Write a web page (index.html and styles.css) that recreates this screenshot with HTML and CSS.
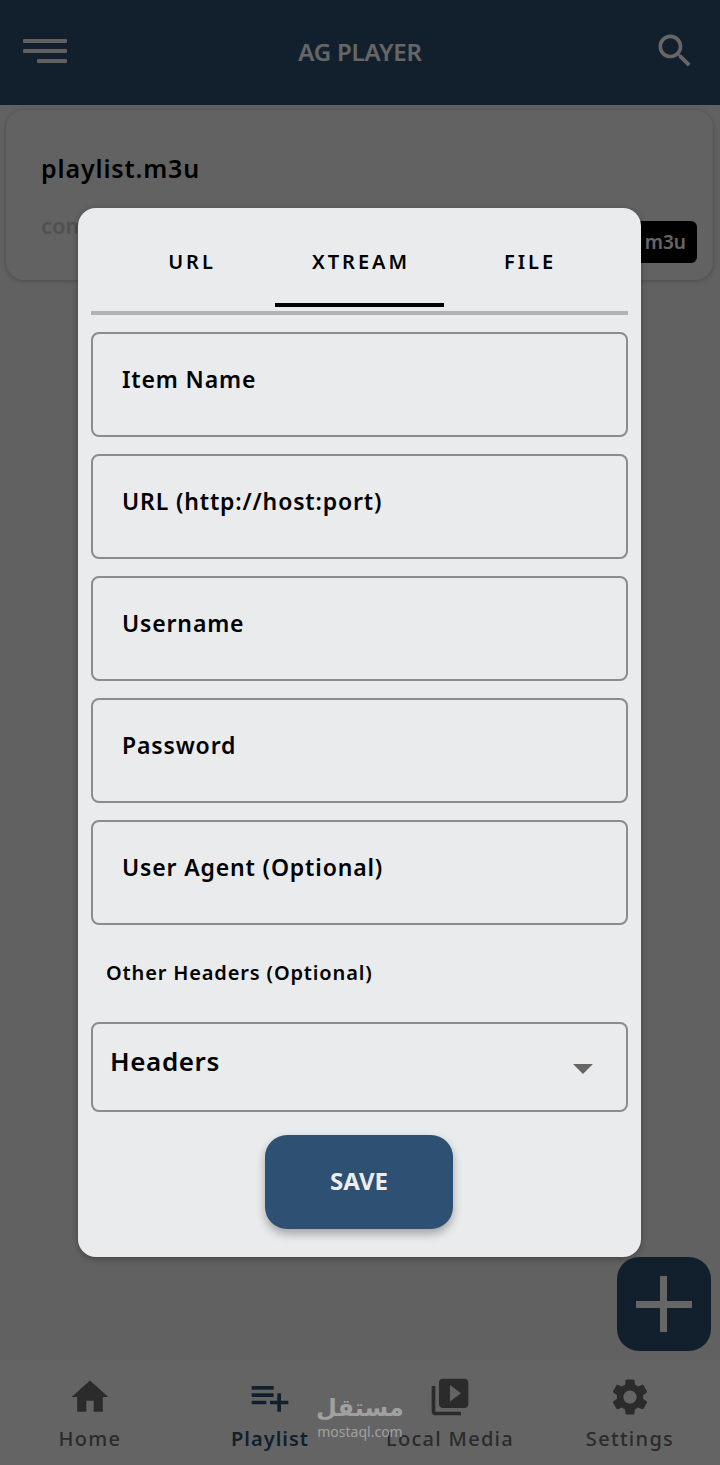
FILE: index.html
```html
<!DOCTYPE html>
<html lang="en">

<head>
    <meta charset="UTF-8">
    <title>AG Player</title>
    <link rel="stylesheet" href="styles.css">
</head>

<body>
    <div class="app">
        <header class="topbar">
            <div class="menu-icon"><span></span><span></span><span class="short"></span></div>
            <div class="title">AG PLAYER</div>
            <svg class="search-icon" viewBox="0 0 24 24"><path d="M15.5 14h-.79l-.28-.27C15.41 12.59 16 11.11 16 9.5 16 5.91 13.09 3 9.5 3S3 5.91 3 9.5 5.91 16 9.5 16c1.61 0 3.09-.59 4.23-1.57l.27.28v.79l5 4.99L20.49 19l-4.99-5zm-6 0C7.01 14 5 11.99 5 9.5S7.01 5 9.5 5 14 7.01 14 9.5 11.99 14 9.5 14z"/></svg>
        </header>

        <main class="content">
            <div class="card">
                <div class="card-name">playlist.m3u</div>
                <div class="card-row">
                    <div class="card-url">com</div>
                    <div class="badge">m3u</div>
                </div>
            </div>
        </main>

        <nav class="bottomnav">
            <div class="nav-item">
                <svg viewBox="0 0 24 24"><path d="M10 20v-6h4v6h5v-8h3L12 3 2 12h3v8z"/></svg>
                <span>Home</span>
            </div>
            <div class="nav-item active">
                <svg viewBox="0 0 24 24"><path d="M14 10H2v2h12v-2zm0-4H2v2h12V6zm4 8v-4h-2v4h-4v2h4v4h2v-4h4v-2h-4zM2 16h8v-2H2v2z"/></svg>
                <span>Playlist</span>
            </div>
            <div class="nav-item">
                <svg viewBox="0 0 24 24"><path d="M4 6H2v14c0 1.1.9 2 2 2h14v-2H4V6zm16-4H8c-1.1 0-2 .9-2 2v12c0 1.1.9 2 2 2h12c1.1 0 2-.9 2-2V4c0-1.1-.9-2-2-2zm-8 12.5v-9l6 4.5-6 4.5z"/></svg>
                <span>Local Media</span>
            </div>
            <div class="nav-item">
                <svg viewBox="0 0 24 24"><path d="M19.14 12.94c.04-.3.06-.61.06-.94 0-.32-.02-.64-.07-.94l2.03-1.58c.18-.14.23-.41.12-.61l-1.92-3.32c-.12-.22-.37-.29-.59-.22l-2.39.96c-.5-.38-1.03-.7-1.62-.94l-.36-2.54c-.04-.24-.24-.41-.48-.41h-3.84c-.24 0-.43.17-.47.41l-.36 2.54c-.59.24-1.13.57-1.62.94l-2.39-.96c-.22-.08-.47 0-.59.22L2.74 8.87c-.12.21-.08.47.12.61l2.03 1.58c-.05.3-.09.63-.09.94s.02.64.07.94l-2.03 1.58c-.18.14-.23.41-.12.61l1.92 3.32c.12.22.37.29.59.22l2.39-.96c.5.38 1.03.7 1.62.94l.36 2.54c.05.24.24.41.48.41h3.84c.24 0 .44-.17.47-.41l.36-2.54c.59-.24 1.13-.56 1.62-.94l2.39.96c.22.08.47 0 .59-.22l1.92-3.32c.12-.22.07-.47-.12-.61l-2.01-1.58zM12 15.6c-1.98 0-3.6-1.62-3.6-3.6s1.62-3.6 3.6-3.6 3.6 1.62 3.6 3.6-1.62 3.6-3.6 3.6z"/></svg>
                <span>Settings</span>
            </div>
        </nav>

        <div class="fab"><span class="fab-h"></span><span class="fab-v"></span></div>
        <div class="scrim"></div>

        <div class="dialog">
            <div class="tabs">
                <div class="tab">URL</div>
                <div class="tab active">XTREAM</div>
                <div class="tab">FILE</div>
            </div>
            <div class="field">Item Name</div>
            <div class="field">URL (http://host:port)</div>
            <div class="field">Username</div>
            <div class="field">Password</div>
            <div class="field">User Agent (Optional)</div>
            <div class="other-label">Other Headers (Optional)</div>
            <div class="select">
                <span>Headers</span>
                <div class="arrow"></div>
            </div>
            <div class="save">SAVE</div>
        </div>

        <div class="watermark">
            <div class="wm-ar" dir="rtl">مستقل</div>
            <div class="wm-en">mostaql.com</div>
        </div>
    </div>
</body>

</html>
```

FILE: styles.css
```css
body {
    margin: 0;
    font-family: 'Noto Sans', 'Open Sans', sans-serif;
}

.app {
    position: relative;
    width: 720px;
    height: 1465px;
    overflow: hidden;
    display: flex;
    flex-direction: column;
    background: #f2f2f2;
}

.topbar {
    height: 105px;
    flex: none;
    box-sizing: border-box;
    background: #2d5073;
    display: flex;
    align-items: center;
    justify-content: space-between;
    padding: 0 23px 3px 23px;
    color: #fff;
}

.menu-icon {
    width: 44px;
    display: flex;
    flex-direction: column;
    align-items: flex-end;
    gap: 6px;
}

.menu-icon span {
    display: block;
    width: 44px;
    height: 4px;
    border-radius: 1px;
    background: #f0f0f0;
}

.menu-icon .short {
    width: 30px;
}

.title {
    font-size: 24px;
    font-weight: 600;
    letter-spacing: -0.2px;
}

.search-icon {
    width: 44px;
    height: 44px;
    fill: #fff;
}

.content {
    flex: 1;
    padding: 5px 7px 0 6px;
}

.card {
    height: 170px;
    box-sizing: border-box;
    background: #f5f5f5;
    border-radius: 18px;
    box-shadow: 0 1px 4px rgba(0, 0, 0, 0.25);
    padding: 41px 16px 0 35px;
}

.card-name {
    font-size: 25px;
    font-weight: 600;
    letter-spacing: 0.85px;
    line-height: 34px;
    color: #000;
}

.card-row {
    display: flex;
    justify-content: space-between;
    align-items: flex-start;
}

.card-url {
    font-size: 22px;
    font-weight: 600;
    color: #c8c8c8;
    margin-top: 25px;
}

.badge {
    background: #000;
    color: #fff;
    font-size: 19px;
    font-weight: 600;
    padding: 7px 11px 7px 60px;
    line-height: 28px;
    border-radius: 6px;
    margin-top: 36px;
}

.bottomnav {
    height: 105px;
    flex: none;
    background: #fafafa;
    display: grid;
    grid-template-columns: repeat(4, 1fr);
}

.nav-item {
    display: flex;
    flex-direction: column;
    align-items: center;
    padding-top: 15px;
    font-size: 20px;
    font-weight: 500;
    letter-spacing: 1.3px;
    line-height: 28px;
    color: #6c6c6c;
}

.nav-item svg {
    width: 44px;
    height: 44px;
    fill: #6c6c6c;
    margin-bottom: 6px;
}

.nav-item.active {
    color: #2d5073;
    font-weight: 600;
    letter-spacing: 1px;
}

.nav-item.active svg {
    fill: #2d5073;
}

.fab {
    position: absolute;
    left: 617px;
    top: 1257px;
    width: 94px;
    height: 94px;
    border-radius: 22px;
    background: #2d5073;
}

.fab-h,
.fab-v {
    position: absolute;
    background: #fff;
}

.fab-h {
    left: 19px;
    top: 44px;
    width: 56px;
    height: 7px;
}

.fab-v {
    left: 43px;
    top: 19px;
    width: 7px;
    height: 56px;
}

.scrim {
    position: absolute;
    inset: 0;
    background: rgba(0, 0, 0, 0.6);
}

.dialog {
    position: absolute;
    left: 78px;
    top: 208px;
    width: 563px;
    height: 1049px;
    box-sizing: border-box;
    background: #eaebed;
    border-radius: 18px;
    box-shadow: 0 2px 6px rgba(0, 0, 0, 0.3);
    padding: 0 13px;
}

.tabs {
    display: grid;
    grid-template-columns: repeat(3, 169px);
    justify-content: center;
    height: 103px;
    border-bottom: 4px solid #b2b2b2;
    margin-bottom: 17px;
}

.tab {
    height: 99px;
    box-sizing: border-box;
    padding: 39px 0 0 3px;
    text-align: center;
    font-size: 20px;
    font-weight: 600;
    letter-spacing: 3px;
    line-height: 30px;
    color: #000;
}

.tab.active {
    border-bottom: 4px solid #000;
}

.field {
    height: 105px;
    box-sizing: border-box;
    border: 2px solid #8c8c8c;
    border-radius: 8px;
    padding: 28px 0 0 29px;
    margin-bottom: 17px;
    font-size: 23px;
    font-weight: 600;
    letter-spacing: 0.85px;
    line-height: 34px;
    color: #000;
}

.other-label {
    padding-left: 15px;
    margin-top: 34px;
    font-size: 20px;
    font-weight: 600;
    letter-spacing: 0.85px;
    line-height: 28px;
    color: #000;
}

.select {
    height: 90px;
    box-sizing: border-box;
    margin-top: 35px;
    border: 2px solid #8c8c8c;
    border-radius: 8px;
    padding: 17px 33px 0 17px;
    display: flex;
    justify-content: space-between;
    font-size: 26px;
    font-weight: 600;
    letter-spacing: 0.6px;
    line-height: 40px;
    color: #000;
}

.arrow {
    width: 0;
    height: 0;
    margin-top: 23px;
    border-left: 10px solid transparent;
    border-right: 10px solid transparent;
    border-top: 10px solid #666;
}

.save {
    width: 188px;
    height: 94px;
    box-sizing: border-box;
    padding-bottom: 4px;
    margin: 23px 0 0 174px;
    border-radius: 22px;
    background: #2d5073;
    box-shadow: 0 5px 10px rgba(0, 0, 0, 0.3);
    color: #eee;
    font-size: 24px;
    font-weight: 700;
    display: flex;
    align-items: center;
    justify-content: center;
}

.watermark {
    position: absolute;
    left: 316px;
    top: 1392px;
    width: 88px;
    text-align: center;
    color: #a0a0a0;
}

.wm-ar {
    font-family: 'DejaVu Sans', sans-serif;
    font-size: 24px;
    font-weight: 700;
    line-height: 32px;
}

.wm-en {
    font-size: 14px;
    line-height: 16px;
}
```
